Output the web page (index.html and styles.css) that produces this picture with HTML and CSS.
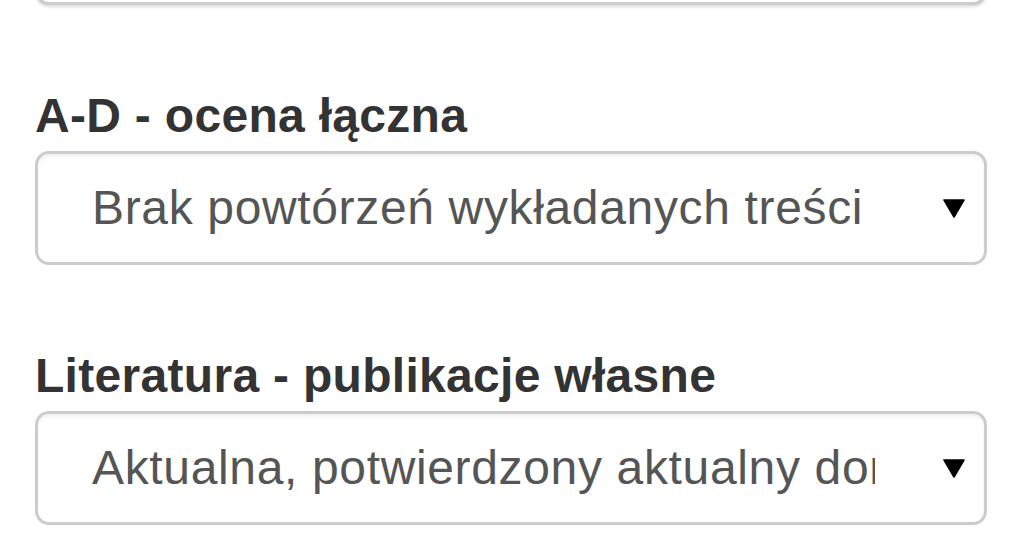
FILE: index.html
```html
<!DOCTYPE html>
<html lang="pl">
<head>
<meta charset="utf-8">
<title>Formularz</title>
<link rel="stylesheet" href="styles.css">
</head>
<body>
<div class="form">
  <div class="form-group">
    <div class="select select-prev"><span class="select-text"></span></div>
  </div>
  <div class="form-group">
    <label class="label">A-D - ocena łączna</label>
    <div class="select">
      <span class="select-text">Brak powtórzeń wykładanych treści w ramach przedmiotów</span>
      <svg class="caret" width="22" height="19" viewBox="0 0 22 19"><polygon points="1,1 21,1 11,18" fill="#000" stroke="#000" stroke-width="1.5" stroke-linejoin="round"/></svg>
    </div>
  </div>
  <div class="form-group form-group-last">
    <label class="label">Literatura - publikacje własne</label>
    <div class="select">
      <span class="select-text">Aktualna, potwierdzony aktualny dorobek naukowy</span>
      <svg class="caret" width="22" height="19" viewBox="0 0 22 19"><polygon points="1,1 21,1 11,18" fill="#000" stroke="#000" stroke-width="1.5" stroke-linejoin="round"/></svg>
    </div>
  </div>
</div>
</body>
</html>
```

FILE: styles.css
```css
html, body {
  margin: 0;
  padding: 0;
  background: #fff;
}
body {
  font-family: "Liberation Sans", Arial, Helvetica, sans-serif;
  overflow: hidden;
}
.form {
  margin-top: -109px;
  padding: 0 37px 0 35px;
}
.form-group {
  margin-bottom: 77px;
}
.form-group-last {
  margin-bottom: 0;
}
.label {
  display: block;
  font-size: 48px;
  line-height: 68px;
  font-weight: bold;
  color: #333;
  letter-spacing: 0.3px;
  margin: 0 0 1px 0;
}
.select {
  box-sizing: border-box;
  width: 952px;
  height: 114px;
  display: flex;
  align-items: center;
  border: 3px solid #cccccc;
  border-radius: 14px;
  background: #fff;
  box-shadow: inset 0 3px 3px rgba(0, 0, 0, 0.05);
  padding-left: 54px;
}
.select-prev {
  box-shadow: inset 0 3px 3px rgba(0, 0, 0, 0.05), 0 2px 3px rgba(0, 0, 0, 0.14);
}
.select-text {
  width: 783px;
  overflow: hidden;
  white-space: nowrap;
  font-size: 48px;
  line-height: 60px;
  color: #555;
  letter-spacing: 0.65px;
}
.caret {
  margin-left: auto;
  margin-right: 19px;
  display: block;
}
```
